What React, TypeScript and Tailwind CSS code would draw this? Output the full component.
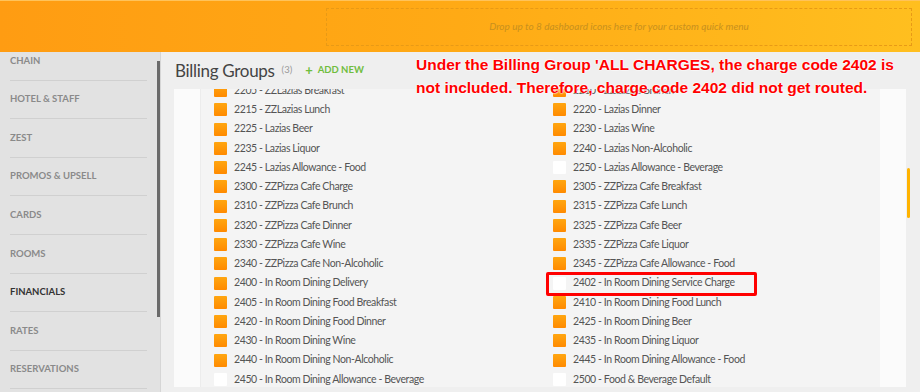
import React from "react";

type Item = { label: string; on: boolean };

const leftItems: Item[] = [
  { label: "2205 - ZZLazias Breakfast", on: true },
  { label: "2215 - ZZLazias Lunch", on: true },
  { label: "2225 - Lazias Beer", on: true },
  { label: "2235 - Lazias Liquor", on: true },
  { label: "2245 - Lazias Allowance - Food", on: true },
  { label: "2300 - ZZPizza Cafe Charge", on: true },
  { label: "2310 - ZZPizza Cafe Brunch", on: true },
  { label: "2320 - ZZPizza Cafe Dinner", on: true },
  { label: "2330 - ZZPizza Cafe Wine", on: true },
  { label: "2340 - ZZPizza Cafe Non-Alcoholic", on: true },
  { label: "2400 - In Room Dining Delivery", on: true },
  { label: "2405 - In Room Dining Food Breakfast", on: true },
  { label: "2420 - In Room Dining Food Dinner", on: true },
  { label: "2430 - In Room Dining Wine", on: true },
  { label: "2440 - In Room Dining Non-Alcoholic", on: true },
  { label: "2450 - In Room Dining Allowance - Beverage", on: false },
];

const rightItems: Item[] = [
  { label: "2210 - ZZLazias Brunch", on: true },
  { label: "2220 - Lazias Dinner", on: true },
  { label: "2230 - Lazias Wine", on: true },
  { label: "2240 - Lazias Non-Alcoholic", on: true },
  { label: "2250 - Lazias Allowance - Beverage", on: false },
  { label: "2305 - ZZPizza Cafe Breakfast", on: true },
  { label: "2315 - ZZPizza Cafe Lunch", on: true },
  { label: "2325 - ZZPizza Cafe Beer", on: true },
  { label: "2335 - ZZPizza Cafe Liquor", on: true },
  { label: "2345 - ZZPizza Cafe Allowance - Food", on: true },
  { label: "2402 - In Room Dining Service Charge", on: false },
  { label: "2410 - In Room Dining Food Lunch", on: true },
  { label: "2425 - In Room Dining Beer", on: true },
  { label: "2435 - In Room Dining Liquor", on: true },
  { label: "2445 - In Room Dining Allowance - Food", on: true },
  { label: "2500 - Food & Beverage Default", on: false },
];

const navItems = [
  "CHAIN",
  "HOTEL & STAFF",
  "ZEST",
  "PROMOS & UPSELL",
  "CARDS",
  "ROOMS",
  "FINANCIALS",
  "RATES",
  "RESERVATIONS",
];

function Row({ item, flagged }: { item: Item; flagged?: boolean }) {
  return (
    <div className="relative flex h-[19.25px] items-center gap-[7px]">
      {item.on ? (
        <span className="h-[13px] w-[13px] shrink-0 rounded-[1px] bg-gradient-to-b from-[#ffa610] to-[#ff8a00]" />
      ) : (
        <span className="h-[13px] w-[13px] shrink-0 rounded-[1px] bg-white" />
      )}
      <span className="whitespace-nowrap text-[10.5px] tracking-[-0.4px] text-[#555]">{item.label}</span>
      {/* red highlight from the annotation */}
      {flagged && (
        <span className="absolute -left-[7px] -top-[2px] h-[24px] w-[211px] rounded-[2px] border-[3px] border-[#ff0000]" />
      )}
    </div>
  );
}

export default function App() {
  return (
    <div className="relative h-[392px] w-[920px] overflow-hidden bg-[#efefef] font-['Lato',sans-serif]">
      {/* Header */}
      <div className="flex h-[52px] items-center border-t border-[#ffc35a] bg-gradient-to-r from-[#ff9c12] via-[#ffaa15] to-[#ffbf1f] pl-[326px] pr-[8px]">
        <div className="flex h-[38px] flex-1 items-center justify-center border border-dashed border-[#e89a16]">
          <span className="text-[10px] italic text-[#c8901e]">
            Drop up to 8 dashboard icons here for your custom quick menu
          </span>
        </div>
      </div>

      <div className="flex h-[340px]">
        {/* Sidebar */}
        <div className="relative flex w-[161px] shrink-0 bg-[#e2e2e2]">
          <div className="mt-[-10px] flex w-[157px] flex-col">
            {navItems.map((n) => (
              <div
                key={n}
                className="mx-[10px] flex h-[38.6px] shrink-0 items-center border-b border-[#d0d0d0]"
              >
                <span
                  className={`text-[9.5px] font-bold ${
                    n === "FINANCIALS" ? "text-[#333]" : "text-[#8a8a8a]"
                  }`}
                >
                  {n}
                </span>
              </div>
            ))}
          </div>
          <div className="mt-[9px] h-[256px] w-[3px] bg-[#6a6a6a]" />
          <div className="w-px bg-[#d6d6d6]" />
        </div>

        {/* Main */}
        <div className="flex flex-1 flex-col">
          <div className="flex h-[37px] items-center pl-[14px]">
            <span className="text-[17px] tracking-[-0.3px] text-[#444]">Billing Groups</span>
            <span className="ml-[7px] text-[9.5px] text-[#9a9a9a]">(3)</span>
            <span className="ml-[13px] flex items-center gap-[5px] text-[9.5px] font-bold text-[#70bd3e]">
              <span className="text-[13px] leading-none">+</span>
              ADD NEW
            </span>
          </div>
          <div className="flex">
            <div className="ml-[13px] flex h-[298px] w-[732px] bg-[#fbfbfb]">
              <div className="w-[26px] shrink-0" />
              <div className="w-[680px] overflow-hidden border-l border-[#ececec] bg-[#f4f4f4]">
                <div className="mt-[-8px] grid grid-cols-[339px_1fr] pl-[13px]">
                  <div className="flex flex-col">
                    {leftItems.map((it) => (
                      <Row key={it.label} item={it} />
                    ))}
                  </div>
                  <div className="flex flex-col">
                    {rightItems.map((it) => (
                      <Row key={it.label} item={it} flagged={it.label.startsWith("2402")} />
                    ))}
                  </div>
                </div>
              </div>
              <div className="flex-1" />
            </div>
            <div className="ml-[1px] mt-[79px] h-[50px] w-[3px] rounded-full bg-[#ffb300]" />
          </div>
        </div>
      </div>

      {/* Annotation */}
      <div className="absolute left-[416px] top-[53px] font-['Liberation_Sans',Arial,sans-serif] text-[15.5px] font-bold leading-[23px] text-[#ff0000] [text-shadow:0_0_2px_#fff,0_0_2px_#fff,0_0_1px_#fff]">
        Under the Billing Group 'ALL CHARGES, the charge code 2402 is
        <br />
        not included. Therefore, charge code 2402 did not get routed.
      </div>
    </div>
  );
}
